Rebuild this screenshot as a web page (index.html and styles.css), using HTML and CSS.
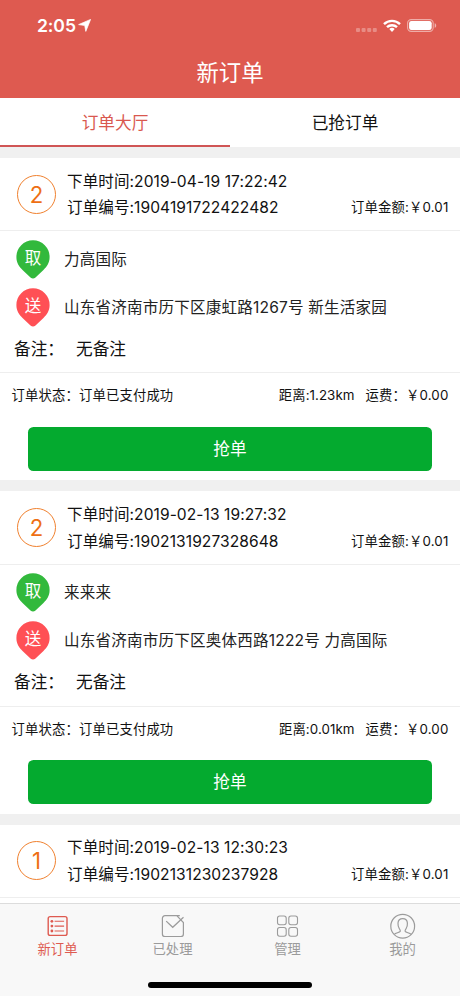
FILE: index.html
```html
<!DOCTYPE html>
<html lang="zh-CN">
<head>
<meta charset="utf-8">
<title>新订单</title>
<link rel="stylesheet" href="styles.css">
</head>
<body>
<div class="app">
  <header class="header">
    <div class="status">
      <span class="clock">2:05</span>
      <svg class="loc" width="13" height="13" viewBox="0 0 13 13"><path d="M12.6 .4 7.8 12.4 6.7 6.5.6 5.6Z" fill="#fff" stroke="#fff" stroke-width=".7" stroke-linejoin="round"/></svg>
      <svg class="signal" width="21" height="4" viewBox="0 0 21 4" fill="#fff" opacity=".3"><rect width="4" height="4" rx="1"/><rect x="5.6" width="4" height="4" rx="1"/><rect x="11.2" width="4" height="4" rx="1"/><rect x="16.8" width="4" height="4" rx="1"/></svg>
      <svg class="wifi" width="18" height="13" viewBox="0 0 18 13" fill="none" stroke="#fff" stroke-width="2.4"><path d="M1 5.1a11.5 11.5 0 0 1 16 0M4 8.2a7.2 7.2 0 0 1 10 0"/><path d="M9 13 6.3 10.1a4 4 0 0 1 5.4 0Z" fill="#fff" stroke="none"/></svg>
      <svg class="battery" width="30" height="13" viewBox="0 0 30 13"><rect x=".6" y=".6" width="25.6" height="11.8" rx="3.6" fill="none" stroke="#fff" stroke-opacity=".5" stroke-width="1.1"/><rect x="2.1" y="2" width="22.6" height="9" rx="2.3" fill="#fff"/><path d="M27.7 4.2c2 .7 2 3.9 0 4.6Z" fill="#fff" opacity=".55"/></svg>
    </div>
    <h1 class="title">新订单</h1>
  </header>
  <nav class="tabs"><a class="tab tab-on">订单大厅</a><a class="tab">已抢订单</a></nav>
  <main class="list">
    <article class="card">
      <div class="top">
        <div class="num">2</div>
        <div class="info"><p class="time">下单时间:2019-04-19 17:22:42</p><div class="line"><span>订单编号:1904191722422482</span><span class="small">订单金额:￥0.01</span></div></div>
      </div>
      <div class="route">
        <div class="stop"><span class="pin"><svg class="drop" viewBox="0 0 34 39"><path d="M17 .3A16.6 16.6 0 0 1 33.6 17c0 6-2.7 9.6-6.4 13.2L19.5 37.5c-1.7 1.4-3.3 1.4-5 0L6.8 30.2C3.1 26.6.4 23 .4 17A16.6 16.6 0 0 1 17 .3Z" fill="#32b93c"/></svg><b class="mark">取</b></span><span class="addr">力高国际</span></div>
        <div class="stop"><span class="pin"><svg class="drop" viewBox="0 0 34 39"><path d="M17 .3A16.6 16.6 0 0 1 33.6 17c0 6-2.7 9.6-6.4 13.2L19.5 37.5c-1.7 1.4-3.3 1.4-5 0L6.8 30.2C3.1 26.6.4 23 .4 17A16.6 16.6 0 0 1 17 .3Z" fill="#ff5055"/></svg><b class="mark">送</b></span><span class="addr">山东省济南市历下区康虹路1267号 新生活家园</span></div>
        <p class="note"><span class="note-key">备注：</span><span>无备注</span></p>
      </div>
      <div class="state"><span>订单状态：订单已支付成功</span><span class="dist">距离:1.23km</span><span>运费：￥0.00</span></div>
      <button class="grab">抢单</button>
    </article>
    <article class="card">
      <div class="top">
        <div class="num">2</div>
        <div class="info"><p class="time">下单时间:2019-02-13 19:27:32</p><div class="line"><span>订单编号:1902131927328648</span><span class="small">订单金额:￥0.01</span></div></div>
      </div>
      <div class="route">
        <div class="stop"><span class="pin"><svg class="drop" viewBox="0 0 34 39"><path d="M17 .3A16.6 16.6 0 0 1 33.6 17c0 6-2.7 9.6-6.4 13.2L19.5 37.5c-1.7 1.4-3.3 1.4-5 0L6.8 30.2C3.1 26.6.4 23 .4 17A16.6 16.6 0 0 1 17 .3Z" fill="#32b93c"/></svg><b class="mark">取</b></span><span class="addr">来来来</span></div>
        <div class="stop"><span class="pin"><svg class="drop" viewBox="0 0 34 39"><path d="M17 .3A16.6 16.6 0 0 1 33.6 17c0 6-2.7 9.6-6.4 13.2L19.5 37.5c-1.7 1.4-3.3 1.4-5 0L6.8 30.2C3.1 26.6.4 23 .4 17A16.6 16.6 0 0 1 17 .3Z" fill="#ff5055"/></svg><b class="mark">送</b></span><span class="addr">山东省济南市历下区奥体西路1222号 力高国际</span></div>
        <p class="note"><span class="note-key">备注：</span><span>无备注</span></p>
      </div>
      <div class="state"><span>订单状态：订单已支付成功</span><span class="dist">距离:0.01km</span><span>运费：￥0.00</span></div>
      <button class="grab">抢单</button>
    </article>
    <article class="card">
      <div class="top">
        <div class="num">1</div>
        <div class="info"><p class="time">下单时间:2019-02-13 12:30:23</p><div class="line"><span>订单编号:1902131230237928</span><span class="small">订单金额:￥0.01</span></div></div>
      </div>
    </article>
  </main>
  <footer class="bar">
    <div class="items">
      <a class="item item-on"><svg class="ico" viewBox="0 0 26 26" fill="none" stroke="currentColor" stroke-width="1.1"><rect x="3.2" y="3.6" width="18.8" height="18.8" rx="2" stroke-width="1.4"/><path d="M9.6 8.3h9.5M9.6 13.1h9.5M9.6 18h9.5"/><g fill="currentColor" stroke="none"><circle cx="6.9" cy="8.3" r="1.4"/><circle cx="6.9" cy="13.1" r="1.4"/><circle cx="6.9" cy="18" r="1.4"/></g></svg><span>新订单</span></a>
      <a class="item"><svg class="ico" viewBox="0 0 26 26" fill="none" stroke="currentColor" stroke-width="1.2"><path d="M19.8 2.7H5a2.6 2.6 0 0 0-2.6 2.6v15.6A2.6 2.6 0 0 0 5 23.5h15.8a2.6 2.6 0 0 0 2.6-2.6V9.5L17 2.8"/><path d="m6.2 8.1 6.5 6.2L23.5 4.2"/></svg><span>已处理</span></a>
      <a class="item"><svg class="ico" viewBox="0 0 26 26" fill="none" stroke="currentColor" stroke-width="1.1"><rect x="2.5" y="3" width="8.7" height="8.7" rx="2.2"/><rect x="13.8" y="3" width="8.7" height="8.7" rx="2.2"/><rect x="2.5" y="14.5" width="8.7" height="8.7" rx="2.2"/><rect x="13.8" y="14.5" width="8.7" height="8.7" rx="2.2"/></svg><span>管理</span></a>
      <a class="item"><svg class="ico" viewBox="0 0 26 26" fill="none" stroke="currentColor" stroke-width="1.2"><circle cx="12.7" cy="13.2" r="11.9"/><path d="M4.3 21.3c1.5-1.5 5.2-1.6 5.9-2.9.5-1-.2-1.9-.9-2.8-1.5-2-1.4-4-1.3-5.6C8.2 7.2 10.1 5.6 12.7 5.6s4.5 1.6 4.7 4.4c.1 1.6.2 3.6-1.3 5.6-.7.9-1.4 1.8-.9 2.8.7 1.3 4.4 1.4 5.9 2.9"/></svg><span>我的</span></a>
    </div>
    <div class="home"></div>
  </footer>
</div>
</body>
</html>
```
FILE: styles.css
```css
* { box-sizing: border-box; margin: 0; padding: 0; }
body { background: #f0f0f0; color: #111; font-family: Inter, "Noto Sans CJK SC", sans-serif; text-spacing-trim: space-all; }
.app { width: 460px; height: 996px; overflow: hidden; display: flex; flex-direction: column; }
.header { flex: none; height: 98px; background: #de5a50; color: #fff; }
.status { height: 50px; padding: 1px 23px 0 37px; display: flex; align-items: center; }
.clock { font-size: 17.6px; font-weight: 600; line-height: 20px; width: 38px; letter-spacing: -0.1px; white-space: nowrap; }
.loc { margin-left: 3px; }
.signal { margin: 9px 6px 0 auto; }
.wifi { margin-right: 6px; }
.title { font-size: 22.4px; line-height: 46px; font-weight: 400; text-align: center; }
.tabs { flex: none; height: 49px; display: flex; background: #fff; }
.tab { flex: 1; text-align: center; font-size: 16.67px; line-height: 51px; }
.tab-on { color: #d9584f; border-bottom: 2px solid #d05555; }
.list { flex: 1; min-height: 0; overflow: hidden; padding-top: 11px; display: flex; flex-direction: column; gap: 11px; }
.card { flex: none; height: 322.3px; background: #fff; }
.top { height: 73.4px; border-bottom: 1px solid #eee; display: flex; padding: 10px 11.5px 0 17px; }
.num { width: 39px; height: 39px; margin-top: 6.6px; border: 1.3px solid #f0812f; border-radius: 50%; color: #ee6f14; font-size: 22.2px; line-height: 37px; text-align: center; }
.info { flex: 1; margin-left: 11px; font-size: 15.56px; letter-spacing: 0.08px; line-height: 26.7px; white-space: nowrap; }
.time { padding-top: 0.5px; }
.line { display: flex; justify-content: space-between; }
.small { font-size: 13.33px; letter-spacing: 0.16px; line-height: 25.6px; }
.route { height: 142px; border-bottom: 1px solid #eee; padding: 8.7px 14px 0 16px; }
.stop { height: 48px; display: flex; align-items: flex-start; }
.pin { flex: none; width: 34px; height: 39px; position: relative; }
.drop { display: block; width: 34px; height: 39px; }
.mark { position: absolute; left: 0; top: 6px; width: 34px; text-align: center; font-size: 16.5px; line-height: 25px; font-weight: 400; color: #fff; }
.addr { margin-left: 14px; font-size: 15.56px; letter-spacing: 0.2px; line-height: 40px; white-space: nowrap; color: #222; }
.note { margin-left: -2px; display: flex; font-size: 16.67px; line-height: 27px; }
.note-key { width: 62px; }
.state { height: 44px; padding: 0 11.5px; display: flex; font-size: 13.33px; letter-spacing: 0.16px; line-height: 45.4px; white-space: nowrap; }
.dist { margin: 0 11px 0 auto; letter-spacing: 0.06px; }
.grab { display: block; width: 404px; height: 44.4px; margin: 9.4px auto 0; border: 0; border-radius: 5.5px; background: #04aa2f; color: #fff; font: 16.67px/45px Inter, "Noto Sans CJK SC", sans-serif; }
.bar { flex: none; height: 93px; border-top: 1px solid #dcdcdc; background: #f8f8f8; }
.items { display: flex; height: 79px; padding-top: 9px; }
.item { flex: 1; display: flex; flex-direction: column; align-items: center; color: #9b9b9b; font-size: 13.33px; line-height: 20px; }
.item-on { color: #de5a50; }
.ico { width: 26px; height: 26px; }
.home { width: 164px; height: 6px; margin: -1px auto 0; border-radius: 3px; background: #000; }
```
